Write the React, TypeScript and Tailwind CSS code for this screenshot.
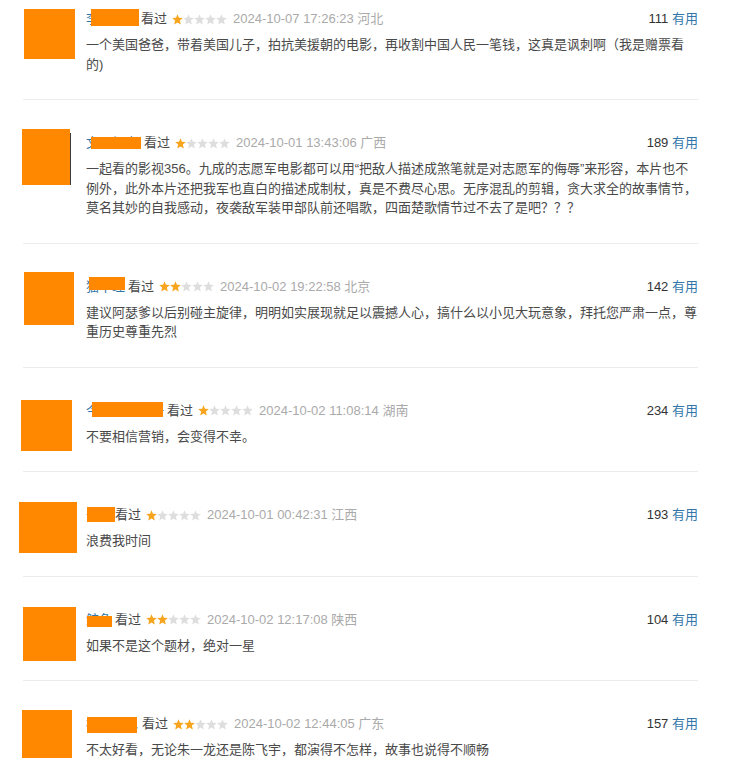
import React from "react";

type Review = {
  id: number;
  name: string;
  nameW: number;
  mask: { left: number; top: number; w: number; h: number };
  avatar: { ml: number; mt: number; w: number; h: number; edge?: boolean };
  stars: number;
  time: string;
  region: string;
  votes: number;
  text: string;
};

const reviews: Review[] = [
  {
    id: 1,
    name: "李家大少",
    nameW: 55,
    mask: { left: 5, top: 0, w: 48, h: 17 },
    avatar: { ml: 1, mt: 0, w: 51, h: 50 },
    stars: 1,
    time: "2024-10-07 17:26:23",
    region: "河北",
    votes: 111,
    text: "一个美国爸爸，带着美国儿子，拍抗美援朝的电影，再收割中国人民一笔钱，这真是讽刺啊（我是赠票看的)",
  },
  {
    id: 2,
    name: "文不加点",
    nameW: 58,
    mask: { left: 5, top: 4, w: 50, h: 12 },
    avatar: { ml: -1, mt: -4, w: 48, h: 56, edge: true },
    stars: 1,
    time: "2024-10-01 13:43:06",
    region: "广西",
    votes: 189,
    text: "一起看的影视356。九成的志愿军电影都可以用“把敌人描述成煞笔就是对志愿军的侮辱”来形容，本片也不例外，此外本片还把我军也直白的描述成制杖，真是不费尽心思。无序混乱的剪辑，贪大求全的故事情节，莫名其妙的自我感动，夜袭敌军装甲部队前还唱歌，四面楚歌情节过不去了是吧？？？",
  },
  {
    id: 3,
    name: "猫不理",
    nameW: 42,
    mask: { left: 3, top: 0, w: 36, h: 13 },
    avatar: { ml: 1, mt: -5, w: 50, h: 53 },
    stars: 2,
    time: "2024-10-02 19:22:58",
    region: "北京",
    votes: 142,
    text: "建议阿瑟爹以后别碰主旋律，明明如实展现就足以震撼人心，搞什么以小见大玩意象，拜托您严肃一点，尊重历史尊重先烈",
  },
  {
    id: 4,
    name: "今天也要好好",
    nameW: 81,
    mask: { left: 6, top: 1, w: 71, h: 15 },
    avatar: { ml: -2, mt: -1, w: 51, h: 51 },
    stars: 1,
    time: "2024-10-02 11:08:14",
    region: "湖南",
    votes: 234,
    text: "不要相信营销，会变得不幸。",
  },
  {
    id: 5,
    name: "一一",
    nameW: 29,
    mask: { left: 1, top: 2, w: 28, h: 15 },
    avatar: { ml: -4, mt: -3, w: 58, h: 51 },
    stars: 1,
    time: "2024-10-01 00:42:31",
    region: "江西",
    votes: 193,
    text: "浪费我时间",
  },
  {
    id: 6,
    name: "鲸鱼",
    nameW: 29,
    mask: { left: 1, top: 6, w: 25, h: 11 },
    avatar: { ml: 0, mt: -3, w: 53, h: 54 },
    stars: 2,
    time: "2024-10-02 12:17:08",
    region: "陕西",
    votes: 104,
    text: "如果不是这个题材，绝对一星",
  },
  {
    id: 7,
    name: "橙子汽水",
    nameW: 56,
    mask: { left: 1, top: 3, w: 50, h: 16 },
    avatar: { ml: -1, mt: -4, w: 50, h: 48 },
    stars: 2,
    time: "2024-10-02 12:44:05",
    region: "广东",
    votes: 157,
    text: "不太好看，无论朱一龙还是陈飞宇，都演得不怎样，故事也说得不顺畅",
  },
];

function Star({ on }: { on: boolean }) {
  return (
    <svg width="11" height="11" viewBox="0 0 24 23" className="shrink-0">
      <polygon
        points="12,0 15.2,7.7 23.6,8.4 17.2,13.9 19.2,22.2 12,17.8 4.8,22.2 6.8,13.9 0.4,8.4 8.8,7.7"
        fill={on ? "#f7a51e" : "#dedede"}
      />
    </svg>
  );
}

function Rating({ value }: { value: number }) {
  return (
    <span className="ml-[5px] flex w-[55px]">
      {[1, 2, 3, 4, 5].map((i) => (
        <Star key={i} on={i <= value} />
      ))}
    </span>
  );
}

function ReviewItem({ r }: { r: Review }) {
  return (
    <div className="flex border-b border-[#ececec] pt-[33px] pb-[25px]">
      {/* avatar slot does not push the row height */}
      <div className="h-0 w-[63px] shrink-0">
        <div className="flex" style={{ marginLeft: r.avatar.ml, marginTop: r.avatar.mt }}>
          <div className="bg-[#ff8800]" style={{ width: r.avatar.w, height: r.avatar.h }} />
          {r.avatar.edge && <div className="mt-1 w-px bg-[#3a3a3a]" style={{ height: r.avatar.h - 4 }} />}
        </div>
      </div>
      <div className="min-w-0 flex-1">
        <div className="relative flex h-5 items-center whitespace-nowrap leading-5">
          <span className="shrink-0 overflow-hidden text-[#37a]" style={{ width: r.nameW }}>
            {r.name}
          </span>
          <span
            className="absolute bg-[#ff8800]"
            style={{ left: r.mask.left, top: r.mask.top, width: r.mask.w, height: r.mask.h }}
          />
          <span className="text-[#494949]">看过</span>
          <Rating value={r.stars} />
          <span className="ml-[6px] text-[#aaa]">
            {r.time} {r.region}
          </span>
          <span className="ml-auto text-[#333]">
            {r.votes} <span className="text-[#37a]">有用</span>
          </span>
        </div>
        <p className="mt-[6px] break-all leading-[19.5px] text-[#494949]">{r.text}</p>
      </div>
    </div>
  );
}

export default function App() {
  return (
    <div
      className="h-[765px] w-[732px] overflow-hidden bg-white text-[13px]"
      style={{ fontFamily: '"Liberation Sans", "Noto Sans CJK SC", sans-serif' }}
    >
      <div className="ml-[23px] -mt-6 w-[675px]">
        {reviews.map((r) => (
          <ReviewItem key={r.id} r={r} />
        ))}
      </div>
    </div>
  );
}
